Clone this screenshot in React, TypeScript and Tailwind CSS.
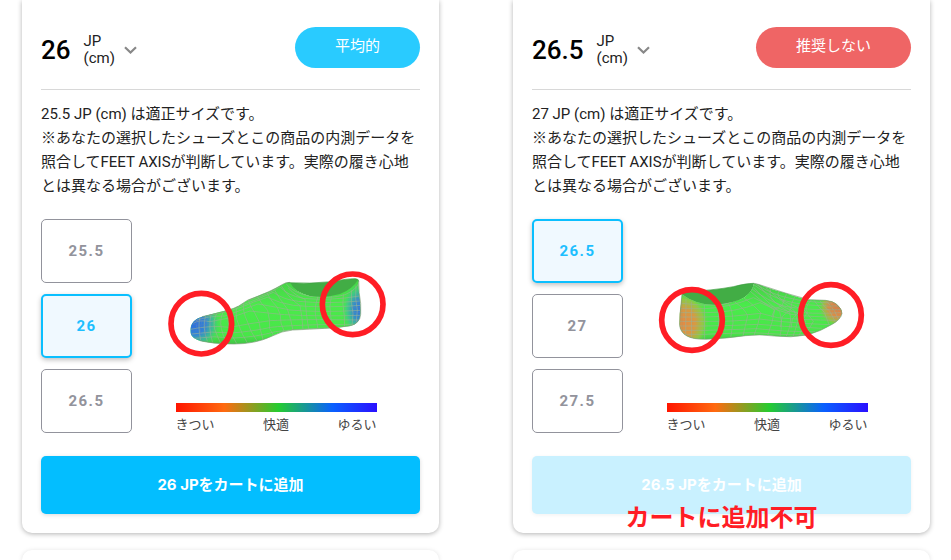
import React, { useState } from "react";

type FitLevel = "average" | "notRecommended";

interface SizeCardProps {
  id: string;
  initialSize: string;
  sizes: string[];
  bestSize: string;
  fit: FitLevel;
  foot: React.ReactNode;
  note?: string;
}

const fitLabels: Record<FitLevel, string> = {
  average: "平均的",
  notRecommended: "推奨しない",
};

const fitColors: Record<FitLevel, string> = {
  average: "bg-[#29cbff]",
  notRecommended: "bg-[#ef6565]",
};

const ChevronIcon = () => (
  <svg className="w-[13px] h-2" viewBox="0 0 13 8" fill="none" aria-hidden="true">
    <path d="M1 1.2 6.5 6.5 12 1.2" stroke="#888" strokeWidth="2.2" />
  </svg>
);

const LooseFoot = () => (
  <svg
    className="w-[232px] h-[110px]"
    viewBox="0 0 696 330"
    role="img"
    aria-label="つま先とかかとがゆるい"
  >
    <defs>
      <linearGradient id="loose-body" x1="0" y1="0" x2="0" y2="1">
        <stop offset="0" stopColor="#45cf45" />
        <stop offset="0.4" stopColor="#4bea4b" />
        <stop offset="0.85" stopColor="#48e648" />
        <stop offset="1" stopColor="#40b846" />
      </linearGradient>
      <radialGradient id="loose-toe" gradientUnits="userSpaceOnUse" cx="104" cy="192" r="82">
        <stop offset="0" stopColor="#2c6fdc" />
        <stop offset="0.4" stopColor="#3385d4" />
        <stop offset="0.68" stopColor="#3cb5a0" stopOpacity="0.8" />
        <stop offset="1" stopColor="#48e648" stopOpacity="0" />
      </radialGradient>
      <radialGradient
        id="loose-heel"
        gradientUnits="userSpaceOnUse"
        cx="0"
        cy="0"
        r="1"
        gradientTransform="translate(604 150) scale(62 86)"
      >
        <stop offset="0" stopColor="#2f74d8" />
        <stop offset="0.4" stopColor="#348fc8" />
        <stop offset="0.7" stopColor="#3dc394" stopOpacity="0.75" />
        <stop offset="1" stopColor="#48e648" stopOpacity="0" />
      </radialGradient>
      <clipPath id="loose-clip">
        <path d="M91 212C91 190 104 176 126 170L178 156C205 150 222 145 236 138L264 120C290 109 310 101 332 92L366 74Q378 67 390 67Q402 96 450 108Q500 114 540 102Q578 88 595 58C594 92 601 120 602 150C602 180 594 193 568 198C520 207 450 205 398 210C368 212 352 221 332 230C300 244 265 252 222 252C175 252 145 248 120 242C100 236 91 226 91 212Z" />
      </clipPath>
    </defs>
    <path
      d="M383 68Q450 72 515 65Q560 56 586 56Q596 57 596 64Q590 92 555 103Q510 118 455 110Q403 96 383 68Z"
      fill="#42ad45"
    />
    <g clipPath="url(#loose-clip)">
      <rect x="85" y="50" width="525" height="210" fill="url(#loose-body)" />
      <circle cx="104" cy="192" r="84" fill="url(#loose-toe)" />
      <rect x="535" y="60" width="72" height="160" fill="url(#loose-heel)" />
      <g fill="none" stroke="#9bb194" strokeWidth="1.8">
        <path d="M100 190Q118 178 150 185Q210 178 270 153Q330 160 374 164Q480 170 600 166" />
        <path d="M92 208Q150 195 210 202Q270 190 330 182Q420 177 600 180" />
        <path d="M95 222Q155 212 215 219Q285 213 332 202Q410 193 594 193" />
        <path d="M104 235Q160 226 222 234Q290 231 346 215Q420 205 570 202" />
        <path d="M107 182Q140 168 195 168Q245 150 294 132Q350 141 390 150Q480 158 602 151" />
        <path d="M140 168Q195 157 240 143Q280 125 322 112Q360 130 400 136Q490 145 602 136" />
        <path d="M230 141Q285 122 340 97Q370 119 415 124Q500 132 600 123" />
        <path d="M264 121Q320 106 360 80Q380 106 430 115Q510 123 598 108" />
        <path d="M378 71Q398 98 450 109Q510 118 555 104Q588 90 596 70" />
        <path d="M120 171Q113 196 122 241" />
        <path d="M137 167Q126 200 142 244" />
        <path d="M153 162Q144 205 158 248" />
        <path d="M172 158Q158 180 164 207Q173 232 182 250" />
        <path d="M191 153Q178 177 184 205Q188 230 202 251" />
        <path d="M211 148Q199 174 208 203Q215 229 231 252" />
        <path d="M232 140Q223 163 236 194Q246 225 263 250" />
        <path d="M251 129Q246 151 263 187Q272 218 292 244" />
        <path d="M265 120Q270 138 283 157Q301 183 302 213L310 241" />
        <path d="M292 109Q302 130 323 151Q331 184 329 206L340 225" />
        <path d="M320 98Q335 126 352 142Q364 164 363 189L372 213" />
        <path d="M342 87Q360 119 382 147Q393 177 399 211" />
        <path d="M363 76Q391 119 420 137Q427 172 429 209" />
        <path d="M384 83Q410 111 435 117Q438 160 446 208" />
        <path d="M474 109Q462 144 467 169Q472 188 474 208" />
        <path d="M514 109Q507 138 512 167L516 206" />
        <path d="M550 103Q546 131 553 168L554 204" />
        <path d="M575 91Q571 125 579 160L576 199" />
        <path d="M588 77Q584 119 592 150L588 195" />
      </g>
      <g fill="none" stroke="#5a86c4" strokeWidth="1.2">
        <path d="M98 193Q123 200 153 188M101 182Q127 188 148 174M112 176L108 214M126 172L120 225M139 178L135 229M578 116L602 120M575 129H604M574 143H604M578 158H602" />
      </g>
    </g>
    <path
      d="M383 68Q450 72 515 65Q560 56 586 56Q596 57 596 64"
      fill="none"
      stroke="#3d9c40"
      strokeWidth="2"
    />
    <path
      d="M126 170Q210 153 236 138L264 120Q335 94 366 74Q376 67 390 67M596 62Q596 100 602 130V163Q600 191 568 198Q505 206 398 210Q367 212 332 230Q285 252 222 252Q160 252 120 242"
      fill="none"
      stroke="#7c9b77"
      strokeWidth="2"
    />
    <circle cx="124" cy="191" r="91" fill="none" stroke="#ff1d25" strokeWidth="17" />
    <circle cx="578" cy="133" r="91" fill="none" stroke="#ff1d25" strokeWidth="17" />
  </svg>
);

const TightFoot = () => (
  <svg
    className="w-[232px] h-[110px]"
    viewBox="0 0 696 330"
    role="img"
    aria-label="つま先とかかとがきつい"
  >
    <defs>
      <linearGradient id="tight-body" x1="0" y1="0" x2="0" y2="1">
        <stop offset="0" stopColor="#45c946" />
        <stop offset="0.4" stopColor="#4aeb4b" />
        <stop offset="0.85" stopColor="#49e549" />
        <stop offset="1" stopColor="#40b846" />
      </linearGradient>
      <radialGradient
        id="tight-heel"
        gradientUnits="userSpaceOnUse"
        cx="0"
        cy="0"
        r="1"
        gradientTransform="translate(98 188) scale(78 92)"
      >
        <stop offset="0" stopColor="#e58a43" />
        <stop offset="0.45" stopColor="#d79a43" />
        <stop offset="0.75" stopColor="#9fc345" stopOpacity="0.8" />
        <stop offset="1" stopColor="#49e549" stopOpacity="0" />
      </radialGradient>
      <radialGradient id="tight-toe" gradientUnits="userSpaceOnUse" cx="564" cy="140" r="64">
        <stop offset="0" stopColor="#e27a45" />
        <stop offset="0.5" stopColor="#d98f47" />
        <stop offset="0.75" stopColor="#a6b846" stopOpacity="0.8" />
        <stop offset="1" stopColor="#49e549" stopOpacity="0" />
      </radialGradient>
      <clipPath id="tight-clip">
        <path d="M93 103Q135 135 190 134Q245 132 281 112Q305 94 309 70L322 73Q360 88 403 99C425 107 450 115 473 119Q500 120 523 121Q549 124 557 133Q574 148 573 160Q567 180 545 192C520 207 495 218 468 225Q420 234 370 228Q325 222 284 227Q230 235 165 238Q125 238 108 228Q87 215 85 191Q85 160 90 132Z" />
      </clipPath>
    </defs>
    <path d="M92 96Q190 91 247 80Q286 70 309 70Q305 96 281 112Q245 136 190 136Q135 136 92 104Z" fill="#42ad45" />
    <g clipPath="url(#tight-clip)">
      <rect x="80" y="60" width="500" height="190" fill="url(#tight-body)" />
      <rect x="80" y="92" width="100" height="160" fill="url(#tight-heel)" />
      <circle cx="564" cy="140" r="66" fill="url(#tight-toe)" />
      <g fill="none" stroke="#9bb194" strokeWidth="1.8">
        <path d="M88 146H162Q235 143 307 113Q360 142 410 154Q480 163 571 158" />
        <path d="M88 158H162Q250 159 327 128Q376 151 420 163Q490 173 567 170" />
        <path d="M86 171H162Q250 171 329 160L380 173Q458 180 557 181" />
        <path d="M86 184H162Q250 185 325 177L395 185Q465 192 537 194" />
        <path d="M87 198H162Q250 197 323 193L400 199Q465 202 514 205" />
        <path d="M90 211H162Q250 209 315 206L400 213Q455 215 492 215" />
        <path d="M99 223H162Q250 219 308 218L390 223Q440 226 470 222" />
        <path d="M93 130Q168 139 220 133Q271 119 300 85Q350 123 402 139Q465 151 572 149" />
        <path d="M93 103Q138 134 191 134Q278 132 308 74Q358 111 406 123Q460 139 563 138" />
        <path d="M315 73Q367 105 414 114Q465 127 544 129" />
        <path d="M105 116L104 226" />
        <path d="M121 125L122 235" />
        <path d="M160 135L161 238" />
        <path d="M196 135Q207 162 202 198L199 236" />
        <path d="M233 131Q246 154 246 189L239 233" />
        <path d="M251 126Q280 145 290 167Q282 201 276 228" />
        <path d="M278 113Q312 139 329 158Q322 194 309 226" />
        <path d="M298 94Q336 129 371 151Q365 187 350 226" />
        <path d="M308 82Q351 130 386 155Q396 188 387 230" />
        <path d="M321 74Q370 132 416 158Q425 187 405 231" />
        <path d="M343 82Q386 120 429 151L440 185Q432 214 425 232" />
        <path d="M360 86Q350 112 375 129L440 161L464 183Q452 206 443 230" />
        <path d="M384 92Q372 111 404 126L463 153L487 184Q475 207 460 228" />
        <path d="M407 101Q398 118 394 136L371 148L362 171" />
        <path d="M432 108Q419 131 419 149L394 169L388 201" />
        <path d="M459 117Q440 137 443 157L424 177L420 205" />
        <path d="M481 120Q461 139 469 158L454 181L447 207" />
        <path d="M489 121L504 141L520 157L535 196M506 121L520 139L536 153L553 186M527 124L538 137L550 152L562 177" />
      </g>
      <g fill="none" stroke="#b39562" strokeWidth="1.5">
        <path d="M92 120L94 221M533 123L542 140L540 158M546 128L551 142L548 160M560 136L559 157M525 135L568 142M528 145L573 151" />
      </g>
    </g>
    <path d="M92 96Q190 91 247 80Q286 70 309 70" fill="none" stroke="#3d9c40" strokeWidth="2" />
    <path
      d="M93 103L88 154L86 197Q89 219 108 228Q125 238 165 238Q230 235 284 227Q325 222 370 228Q420 234 468 225Q510 214 545 192Q570 178 573 160Q573 148 557 133Q546 123 523 121L473 119L403 99L322 73L309 70"
      fill="none"
      stroke="#7c9b77"
      strokeWidth="2"
    />
    <circle cx="123" cy="180" r="91" fill="none" stroke="#ff1d25" strokeWidth="17" />
    <circle cx="540" cy="165" r="91" fill="none" stroke="#ff1d25" strokeWidth="17" />
  </svg>
);

const FitScale = () => (
  <div className="w-[201px]">
    <div className="h-[9px] bg-[linear-gradient(90deg,#ff1500_0%,#ff6a10_24%,#25cc30_51%,#0a60ff_78%,#2a10ff_100%)]" />
    <div className="mt-[5px] flex justify-between text-[13px] leading-4 text-[#444]">
      <span>きつい</span>
      <span>快適</span>
      <span>ゆるい</span>
    </div>
  </div>
);

const SizeCard: React.FC<SizeCardProps> = ({
  id,
  initialSize,
  sizes,
  bestSize,
  fit,
  foot,
  note,
}) => {
  const [size, setSize] = useState(initialSize);
  const disabled = fit === "notRecommended";

  return (
    <section className="rounded-b-[10px] bg-white px-[19px] pt-[27px] pb-[19px] shadow-[0_1px_5px_rgba(0,0,0,0.3)]">
      <div className="flex items-center justify-between border-b border-[#d8d8d8] pb-[21px]">
        <div className="flex items-center gap-[13px] pt-1">
          <h2 className="text-[26px] leading-8 font-medium text-black">{size}</h2>
          <div className="relative flex items-center gap-[9px] text-[15px] leading-[17px]">
            <label htmlFor={`${id}-unit`}>
              JP
              <br />
              (cm)
            </label>
            <ChevronIcon />
            <select id={`${id}-unit`} className="absolute inset-0 w-full opacity-0">
              <option>JP (cm)</option>
              <option>US</option>
              <option>EU</option>
            </select>
          </div>
        </div>
        <span
          className={`rounded-full px-10 pt-[7px] pb-[10px] text-[15px] leading-6 text-white ${fitColors[fit]}`}
        >
          {fitLabels[fit]}
        </span>
      </div>

      <p className="mt-3 text-[15px] leading-6 text-[#222]">
        {bestSize} JP (cm) は適正サイズです。
        <br />
        ※あなたの選択したシューズとこの商品の内測データを照合してFEET
        AXISが判断しています。実際の履き心地とは異なる場合がございます。
      </p>

      <div className="mt-[21px] flex">
        <div className="flex flex-col gap-[11px]">
          {sizes.map((item) => (
            <button
              key={item}
              type="button"
              aria-pressed={item === size}
              onClick={() => setSize(item)}
              className={`h-16 w-[91px] rounded-[5px] text-[15px] font-bold tracking-widest ${
                item === size
                  ? "border-2 border-[#0abfff] bg-[#f0f9ff] text-[#1dbfff] shadow-[0_2px_5px_rgba(0,0,0,0.25)]"
                  : "border border-[#92939c] text-[#92939c]"
              }`}
            >
              {item}
            </button>
          ))}
        </div>
        <div className="flex flex-1 flex-col items-center justify-end gap-[33px]">
          {foot}
          <FitScale />
        </div>
      </div>

      <div className="relative mt-[23px]">
        <button
          type="button"
          disabled={disabled}
          className={`h-[58px] w-full rounded-[5px] font-[Inter,'Noto_Sans_CJK_JP',sans-serif] text-[15px] font-bold text-white ${
            disabled
              ? "bg-[#c9f1ff] shadow-[0_1px_4px_rgba(0,0,0,0.06)]"
              : "bg-[#03beff] shadow-[0_1px_4px_rgba(0,0,0,0.15)]"
          }`}
        >
          {size} JPをカートに追加
        </button>
        {note && (
          <p className="absolute inset-x-0 -bottom-5 text-center text-2xl font-bold text-[#ff1d25]">
            {note}
          </p>
        )}
      </div>
    </section>
  );
};

export default function App() {
  return (
    <main className="grid grid-cols-2 gap-x-[74px] gap-y-[17px] overflow-hidden bg-white pr-[21px] pl-[22px] font-[Roboto,'Noto_Sans_CJK_JP',sans-serif] text-[#222]">
      <SizeCard
        id="left"
        initialSize="26"
        sizes={["25.5", "26", "26.5"]}
        bestSize="25.5"
        fit="average"
        foot={<LooseFoot />}
      />
      <SizeCard
        id="right"
        initialSize="26.5"
        sizes={["26.5", "27", "27.5"]}
        bestSize="27"
        fit="notRecommended"
        foot={<TightFoot />}
        note="カートに追加不可"
      />
      {/* tops of the next cards */}
      <section className="h-[10px] rounded-t-[10px] bg-white shadow-[0_1px_5px_rgba(0,0,0,0.15)]" />
      <section className="h-[10px] rounded-t-[10px] bg-white shadow-[0_1px_5px_rgba(0,0,0,0.15)]" />
    </main>
  );
}
